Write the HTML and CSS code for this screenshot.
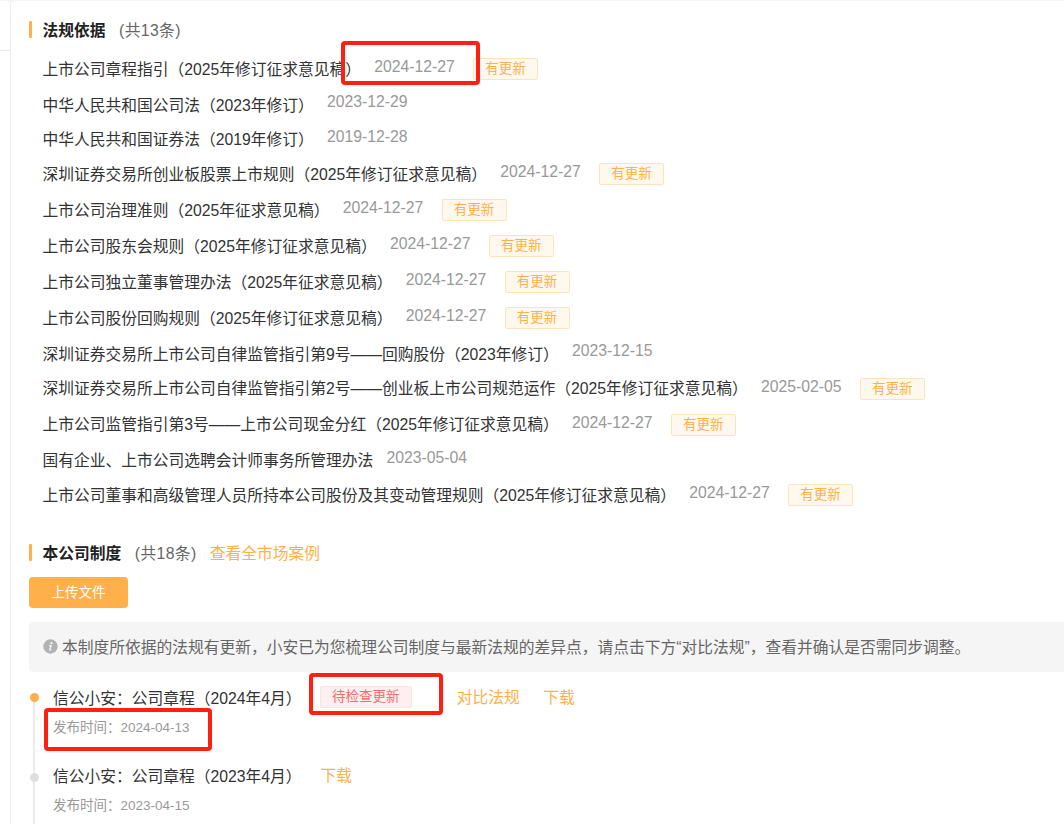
FILE: index.html
```html
<!DOCTYPE html>
<html lang="zh-CN">
<head>
  <meta charset="UTF-8">
  <title>法规依据</title>
  <link rel="stylesheet" href="styles.css">
</head>
<body>
  <div class="page">
    <aside class="side">
      <div class="side-head"></div>
    </aside>

    <main class="main">
      <div class="section-title">
        <h2>法规依据</h2>
        <span class="count">(共13条)</span>
      </div>

      <ul class="law-list">
        <li><span class="name">上市公司章程指引（2025年修订征求意见稿）</span><span class="date">2024-12-27<i class="mark mark-date"></i></span><span class="tag">有更新</span></li>
        <li class="plain"><span class="name">中华人民共和国公司法（2023年修订）</span><span class="date">2023-12-29</span></li>
        <li class="plain"><span class="name">中华人民共和国证券法（2019年修订）</span><span class="date">2019-12-28</span></li>
        <li><span class="name">深圳证券交易所创业板股票上市规则（2025年修订征求意见稿）</span><span class="date">2024-12-27</span><span class="tag">有更新</span></li>
        <li><span class="name">上市公司治理准则（2025年征求意见稿）</span><span class="date">2024-12-27</span><span class="tag">有更新</span></li>
        <li><span class="name">上市公司股东会规则（2025年修订征求意见稿）</span><span class="date">2024-12-27</span><span class="tag">有更新</span></li>
        <li><span class="name">上市公司独立董事管理办法（2025年征求意见稿）</span><span class="date">2024-12-27</span><span class="tag">有更新</span></li>
        <li><span class="name">上市公司股份回购规则（2025年修订征求意见稿）</span><span class="date">2024-12-27</span><span class="tag">有更新</span></li>
        <li class="plain"><span class="name">深圳证券交易所上市公司自律监管指引第9号——回购股份（2023年修订）</span><span class="date">2023-12-15</span></li>
        <li><span class="name">深圳证券交易所上市公司自律监管指引第2号——创业板上市公司规范运作（2025年修订征求意见稿）</span><span class="date">2025-02-05</span><span class="tag">有更新</span></li>
        <li><span class="name">上市公司监管指引第3号——上市公司现金分红（2025年修订征求意见稿）</span><span class="date">2024-12-27</span><span class="tag">有更新</span></li>
        <li class="plain"><span class="name">国有企业、上市公司选聘会计师事务所管理办法</span><span class="date">2023-05-04</span></li>
        <li><span class="name">上市公司董事和高级管理人员所持本公司股份及其变动管理规则（2025年修订征求意见稿）</span><span class="date">2024-12-27</span><span class="tag">有更新</span></li>
      </ul>

      <div class="section-title">
        <h2>本公司制度</h2>
        <span class="count">(共18条)</span>
        <a class="link" href="#">查看全市场案例</a>
      </div>

      <button class="upload-btn">上传文件</button>

      <div class="notice">
        <svg class="info" viewBox="0 0 15 15" width="15" height="15">
          <circle cx="7.5" cy="7.5" r="7.2" fill="#b2b2b2"/>
          <circle cx="8.4" cy="4.2" r="1.1" fill="#f5f5f5"/>
          <path d="M6.2 6.7H8L6.9 10.9H8.3" fill="none" stroke="#f5f5f5" stroke-width="1.4"/>
        </svg>
        <span>本制度所依据的法规有更新，小安已为您梳理公司制度与最新法规的差异点，请点击下方“对比法规”，查看并确认是否需同步调整。</span>
      </div>

      <ul class="timeline">
        <li class="active">
          <div class="row">
            <span class="file">信公小安：公司章程（2024年4月）</span>
            <span class="tag danger">待检查更新<i class="mark mark-tag"></i></span>
            <a class="link compare" href="#">对比法规</a>
            <a class="link" href="#">下载</a>
          </div>
          <div class="time">发布时间：2024-04-13<i class="mark mark-time"></i></div>
        </li>
        <li>
          <div class="row">
            <span class="file">信公小安：公司章程（2023年4月）</span>
            <a class="link" href="#">下载</a>
          </div>
          <div class="time">发布时间：2023-04-15</div>
        </li>
      </ul>
    </main>
  </div>
</body>
</html>
```
FILE: styles.css
```css
:root {
  --primary: #ffb04a;
  --text: #333;
  --text-light: #999;
  --line: #ececf0;
}

* {
  box-sizing: border-box;
}

body {
  margin: 0;
  height: 824px;
  overflow: hidden;
  background: #f5f5f7;
  color: var(--text);
  font-family: "Liberation Sans", "Noto Sans CJK SC", sans-serif;
  font-size: 15.75px;
}

h2, ul {
  margin: 0;
  padding: 0;
}

ul {
  list-style: none;
}

.page {
  display: flex;
  height: 824px;
  padding-top: 1px;
}

.side {
  width: 10px;
  background: #fff;
  border-top-right-radius: 4px;
}

.side-head {
  height: 50px;
  border-bottom: 1px solid var(--line);
}

.main {
  flex: 1;
  min-width: 0;
  padding: 16px 0 0 18px;
  background: #fff;
  border-left: 1px solid var(--line);
  border-top-left-radius: 4px;
  white-space: nowrap;
}

.section-title {
  display: flex;
  align-items: center;
  height: 24px;
}

.section-title::before {
  content: "";
  width: 3px;
  height: 17px;
  margin-right: 10.5px;
  border-radius: 1px;
  background: var(--primary);
}

.section-title h2 {
  font-size: 15.75px;
  font-weight: bold;
  color: #222;
}

.count {
  margin-left: 13.5px;
  color: #666;
  letter-spacing: .4px;
}

.link {
  color: var(--primary);
  text-decoration: none;
}

.section-title .link {
  margin-left: 13px;
}

.law-list {
  padding: 10px 0 27px 13.5px;
}

.law-list li {
  display: flex;
  align-items: center;
  height: 36px;
}

.law-list li.plain {
  height: 34.5px;
}

.name {
  padding-bottom: 2px;
}

.plain .name {
  padding-bottom: 0;
}

.date {
  position: relative;
  top: -2px;
  margin-left: 13.2px;
  color: var(--text-light);
}

.tag {
  height: 22px;
  margin-left: 18.3px;
  padding: 0 11.25px;
  border: 1px solid #ffe3bb;
  border-radius: 2px;
  background: #fff8ee;
  color: var(--primary);
  font-size: 13.5px;
  line-height: 19px;
}

.tag.danger {
  position: relative;
  border-color: #fde2e2;
  background: #fef0f0;
  color: #f56c6c;
}

.upload-btn {
  display: block;
  width: 99px;
  height: 31px;
  margin-top: 13px;
  padding: 0;
  border: none;
  border-radius: 4px;
  background: var(--primary);
  color: #fff;
  font-family: inherit;
  font-size: 13.5px;
  line-height: 30px;
}

.notice {
  display: flex;
  align-items: center;
  height: 50px;
  margin-top: 14px;
  padding: 0 0 2px 14px;
  border-radius: 4px 0 0 4px;
  background: #f5f5f5;
  color: #666;
}

.info {
  margin-right: 4px;
}

/* timeline */
.timeline {
  padding-top: 12px;
}

.timeline li {
  position: relative;
  height: 78px;
  padding-left: 24px;
}

.timeline li::before {
  content: "";
  position: absolute;
  left: 4px;
  top: 13px;
  width: 2px;
  height: 78px;
  background: #ebebeb;
}

.timeline li::after {
  content: "";
  position: absolute;
  z-index: 1;
  left: 1px;
  top: 11px;
  width: 9px;
  height: 9px;
  border-radius: 50%;
  background: #dfdfdf;
}

.timeline li.active::after {
  top: 9px;
  background: var(--primary);
}

.row {
  display: flex;
  align-items: center;
  height: 26px;
}

.row .link {
  margin-left: 19px;
  padding-bottom: 2px;
}

.row .compare {
  margin-left: 45px;
}

.row .compare + .link {
  margin-left: 23.5px;
}

.time {
  position: relative;
  width: max-content;
  height: 34px;
  margin-top: 1px;
  line-height: 34px;
  color: var(--text-light);
  font-size: 13.5px;
}

/* red annotation frames */
.mark {
  position: absolute;
  z-index: 2;
  border: 4px solid #ff2012;
  border-radius: 4px;
}

.mark-date {
  left: -33.5px;
  top: -17px;
  width: 139px;
  height: 44px;
}

.mark-tag {
  left: -12px;
  top: -14px;
  width: 134px;
  height: 42px;
}

.mark-time {
  left: -9px;
  top: -3px;
  width: 168px;
  height: 43px;
}
```
